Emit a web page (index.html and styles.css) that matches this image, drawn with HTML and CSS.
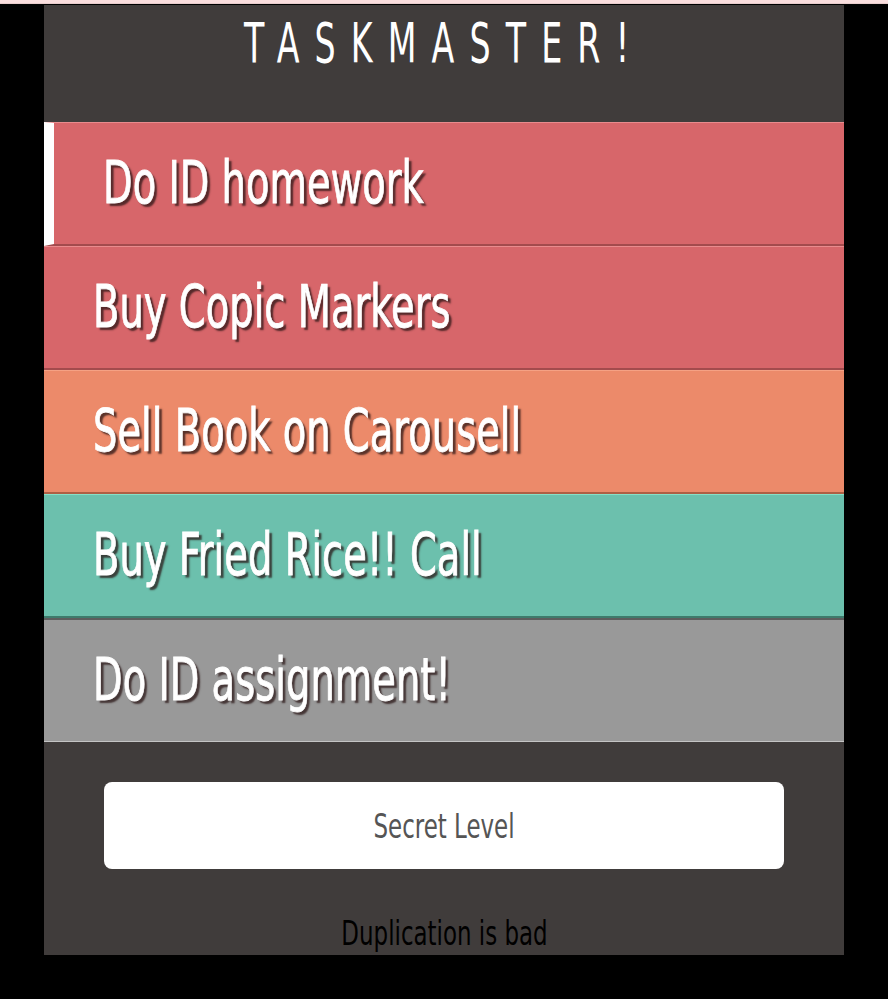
FILE: index.html
```html
<!DOCTYPE html>
<html>
<head>
<meta charset="utf-8">
<link rel="stylesheet" href="styles.css">
</head>
<body>
<div class="topbar"></div>
<div class="app">
  <header class="header"><h1 class="title"><span class="title-text">TASKMASTER!</span></h1></header>
  <ul class="tasks">
    <li class="task red selected"><span class="label">Do ID homework</span></li>
    <li class="task red"><span class="label">Buy Copic Markers</span></li>
    <li class="task orange"><span class="label">Sell Book on Carousell</span></li>
    <li class="task teal"><span class="label">Buy Fried Rice!! Call</span></li>
    <li class="task gray"><span class="label">Do ID assignment!</span></li>
  </ul>
  <div class="actions"><button class="secret"><span class="narrow">Secret Level</span></button></div>
  <p class="note"><span class="narrow">Duplication is bad</span></p>
</div>
</body>
</html>
```
FILE: styles.css
```css
html, body { margin: 0; padding: 0; background: #000; }
body { font-family: "DejaVu Sans Condensed", "DejaVu Sans", sans-serif; }
.topbar { height: 3px; background: #fadede; border-bottom: 1px solid #e8cccc; }
.app { width: 800px; height: 950px; margin: 1px auto 0; background: #403c3b; overflow: hidden; }
.header { height: 117px; }
.title { margin: 0; padding-top: 10px; text-align: center; color: #fff; font-weight: normal; font-size: 56px; line-height: 56px; }
.title-text { display: inline-block; letter-spacing: 0.41em; transform: scaleX(0.66); transform-origin: 50% 50%; white-space: nowrap; }
.tasks { list-style: none; margin: 0; padding: 0; }
.task { height: 121px; display: flex; align-items: center; padding-left: 49px; padding-bottom: 3px; box-sizing: border-box; height: 124px; border-top: 1px solid; border-bottom: 2px solid; color: #fff; font-size: 59px; white-space: nowrap; }
.label { display: inline-block; transform: scaleX(0.725); transform-origin: 0 50%; -webkit-text-stroke: 0.8px #fff; text-shadow: 4px 3px 2px rgba(40,20,20,0.75); }
.red { background: #d7666a; border-top-color: #e98b8d; border-bottom-color: #a34b4d; }
.orange { background: #ec8a6a; border-top-color: #f5a184; border-bottom-color: #ae5f45; }
.teal { background: #6cc0ad; border-top-color: #86e0c8; border-bottom-color: #3e7b6c; }
.gray { background: #999; border-top-color: #5d5d5d; border-bottom-color: #c4c4c4; border-top-width: 2px; border-bottom-width: 1px; }
.selected { border-left: 10px solid #fff; }
.actions { padding: 40px 60px 0; }
.secret { display: block; width: 100%; height: 87px; border: 0; border-radius: 8px; background: #fff; color: #555; font-family: inherit; font-size: 34px; }
.narrow { display: inline-block; transform: scaleX(0.75); white-space: nowrap; }
.note { margin: 44px 0 0; text-align: center; color: #000; font-size: 34px; }
```
